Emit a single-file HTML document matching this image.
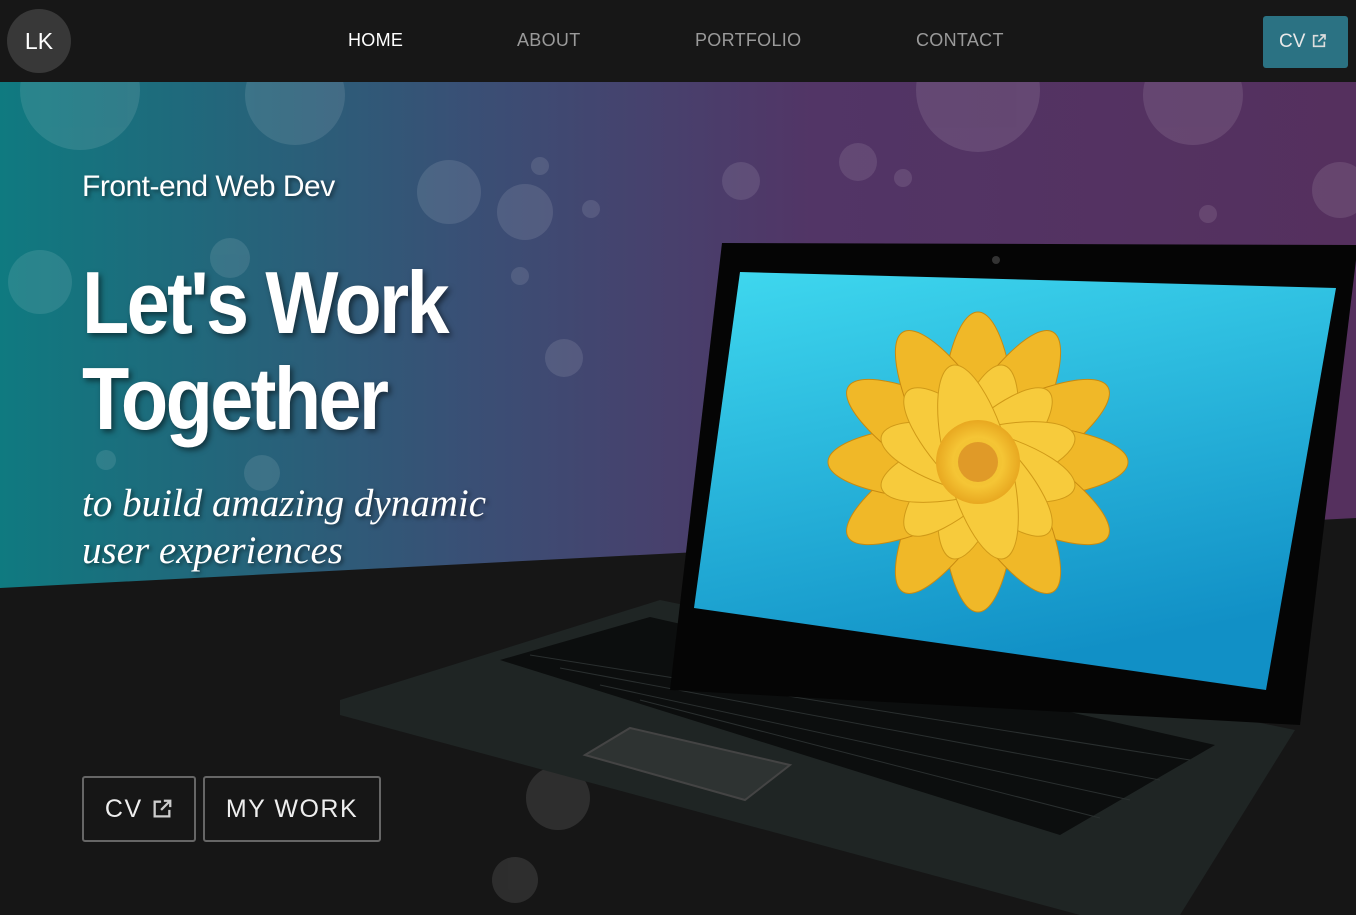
<!DOCTYPE html>
<html><head><meta charset="utf-8"><style>
*{margin:0;padding:0;box-sizing:border-box}
body{width:1356px;height:915px;overflow:hidden;background:#161616;font-family:"Liberation Sans",sans-serif;position:relative}
nav{position:absolute;top:0;left:0;width:1356px;height:82px;background:#171717;z-index:5}
.logo{position:absolute;left:7px;top:9px;width:64px;height:64px;border-radius:50%;background:#383838;color:#fff;font-size:23px;line-height:64px;text-align:center}
.nav a{position:absolute;top:30px;font-size:18px;color:#9a9a9a;letter-spacing:.3px}
.cvtop{position:absolute;left:1263px;top:16px;width:85px;height:52px;background:#2b7283;border-radius:3px;color:#e8e8e8;font-size:19px;line-height:52px;padding-left:16px}
.t1{position:absolute;left:82px;top:170px;color:#fff;font-size:30px;letter-spacing:-.5px;text-shadow:2px 2px 4px rgba(0,0,0,.5);z-index:3}
.t2{position:absolute;left:82px;top:255px;color:#fff;font-size:88px;font-weight:bold;line-height:96px;letter-spacing:-3px;transform:scaleX(.88);transform-origin:left;text-shadow:3px 3px 6px rgba(0,0,0,.5);z-index:3}
.t3{position:absolute;left:82px;top:480px;color:#fff;font-family:"Liberation Serif",serif;font-style:italic;font-size:39px;line-height:47px;text-shadow:2px 2px 4px rgba(0,0,0,.5);z-index:3}
.btn{position:absolute;top:776px;height:66px;border:2px solid #666;border-radius:3px;color:#eee;font-size:25px;line-height:62px;text-align:center;letter-spacing:1.5px;z-index:3}
</style></head><body>
<svg width="1356" height="915" style="position:absolute;left:0;top:0">
<defs>
<linearGradient id="bg" x1="0" x2="1" y1="0" y2="0"><stop offset="0" stop-color="#0f7a80"/><stop offset=".35" stop-color="#3a4f75"/><stop offset=".6" stop-color="#523566"/><stop offset="1" stop-color="#55305e"/></linearGradient>
<linearGradient id="scr" x1="0" y1="0" x2="0.3" y2="1"><stop offset="0" stop-color="#3fd8ef"/><stop offset="1" stop-color="#1190c6"/></linearGradient>
<radialGradient id="fl"><stop offset="0" stop-color="#e0a030"/><stop offset=".25" stop-color="#f0c030"/><stop offset=".6" stop-color="#f5c535"/><stop offset="1" stop-color="#e8a820"/></radialGradient>
</defs>
<polygon points="0,82 1356,82 1356,518 0,588" fill="url(#bg)"/>
<g fill="#fff" opacity=".1">
<circle cx="80" cy="90" r="60"/><circle cx="295" cy="95" r="50"/><circle cx="978" cy="90" r="62"/><circle cx="1193" cy="95" r="50"/><circle cx="449" cy="192" r="32"/><circle cx="525" cy="212" r="28"/><circle cx="40" cy="282" r="32"/><circle cx="230" cy="258" r="20"/><circle cx="564" cy="358" r="19"/><circle cx="741" cy="181" r="19"/><circle cx="858" cy="162" r="19"/><circle cx="1340" cy="190" r="28"/><circle cx="1160" cy="390" r="32"/><circle cx="262" cy="473" r="18"/><circle cx="106" cy="460" r="10"/><circle cx="558" cy="798" r="32"/><circle cx="515" cy="880" r="23"/><circle cx="800" cy="456" r="19"/><circle cx="737" cy="400" r="18"/><circle cx="591" cy="209" r="9"/><circle cx="903" cy="178" r="9"/><circle cx="540" cy="166" r="9"/><circle cx="520" cy="276" r="9"/><circle cx="1208" cy="214" r="9"/>
</g>
<polygon points="340,700 660,600 1295,730 1180,915 1080,915 340,715" fill="#1f2524"/>
<polygon points="500,660 650,617 1215,745 1060,835" fill="#0c0e0e"/>
<g stroke="#2a2f2f" stroke-width="1">
<line x1="530" y1="655" x2="1190" y2="760"/><line x1="560" y1="668" x2="1160" y2="780"/><line x1="600" y1="685" x2="1130" y2="800"/><line x1="640" y1="700" x2="1100" y2="818"/>
</g>
<polygon points="585,755 630,728 790,765 745,800" fill="#2e3332" stroke="#444" stroke-width="2"/>
<polygon points="722,243 1356,245 1356,260 1300,725 670,690" fill="#050505"/>
<polygon points="740,272 1336,288 1266,690 694,608" fill="url(#scr)"/>
<circle cx="996" cy="260" r="4" fill="#333"/>
<g transform="translate(978,462)">
<g fill="#f0b828" stroke="#c88a10" stroke-width="1">
<ellipse rx="40" ry="150" transform="rotate(0)"/><ellipse rx="40" ry="150" transform="rotate(30)"/><ellipse rx="40" ry="150" transform="rotate(60)"/><ellipse rx="40" ry="150" transform="rotate(90)"/><ellipse rx="40" ry="150" transform="rotate(120)"/><ellipse rx="40" ry="150" transform="rotate(150)"/>
</g>
<g fill="#f7cb3c" stroke="#d09a18" stroke-width="1">
<ellipse rx="32" ry="100" transform="rotate(15)"/><ellipse rx="32" ry="100" transform="rotate(45)"/><ellipse rx="32" ry="100" transform="rotate(75)"/><ellipse rx="32" ry="100" transform="rotate(105)"/><ellipse rx="32" ry="100" transform="rotate(135)"/><ellipse rx="32" ry="100" transform="rotate(165)"/>
</g>
<circle r="42" fill="url(#fl)"/><circle r="20" fill="#e09a28"/>
</g>
</svg>
<nav>
<div class="logo">LK</div>
<div class="nav"><a style="left:348px;color:#fff">HOME</a><a style="left:517px">ABOUT</a><a style="left:695px">PORTFOLIO</a><a style="left:916px">CONTACT</a></div>
<div class="cvtop">CV <svg width="16" height="16" viewBox="0 0 24 24" style="vertical-align:-2px" fill="none" stroke="#ddd" stroke-width="2.5"><path d="M11 4H4v16h16v-7"/><path d="M14 3h7v7M21 3L11 13"/></svg></div>
</nav>
<div class="t1">Front-end Web Dev</div>
<div class="t2">Let's Work<br>Together</div>
<div class="t3">to build amazing dynamic<br>user experiences</div>
<div class="btn" style="left:82px;width:114px">CV <svg width="22" height="22" viewBox="0 0 24 24" style="vertical-align:-3px" fill="none" stroke="#ccc" stroke-width="2.5"><path d="M11 4H4v16h16v-7"/><path d="M14 3h7v7M21 3L11 13"/></svg></div>
<div class="btn" style="left:203px;width:178px">MY WORK</div>
</body></html>
